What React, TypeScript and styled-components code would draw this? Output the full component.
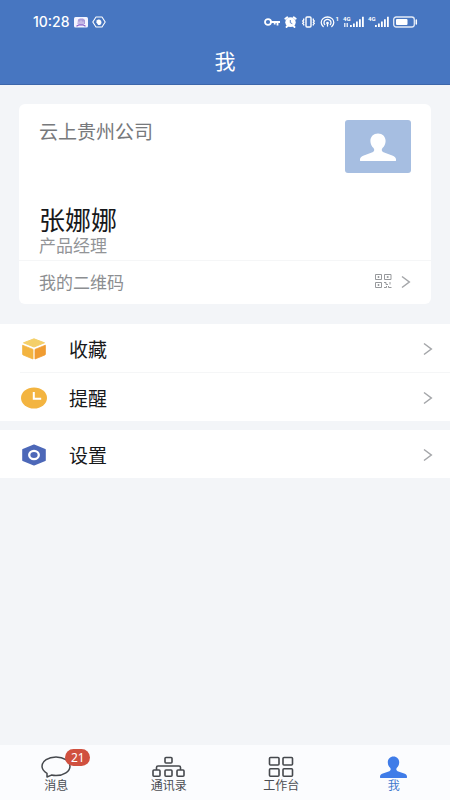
import React from "react";
import styled, { createGlobalStyle } from "styled-components";

const GlobalStyle = createGlobalStyle`
  *, *::before, *::after { box-sizing: border-box; }
  body {
    margin: 0;
    background: #f3f5f8;
    font-family: "Noto Sans CJK SC", sans-serif;
    color: #17181a;
  }
  h1, h2, p, ul { margin: 0; padding: 0; font-weight: 400; }
  ul { list-style: none; }
  svg { display: block; flex: none; }
  button { font: inherit; color: inherit; border: 0; background: none; padding: 0; cursor: pointer; }
`;

const Page = styled.div`
  min-height: 100vh;
  display: flex;
  flex-direction: column;
`;

const Header = styled.header`
  background: #4776c1;
  border-bottom: 1px solid #3c66aa;
  color: #fff;
`;

const StatusBar = styled.div`
  height: 42px;
  padding: 2px 32px 0 33px;
  display: flex;
  align-items: center;
  justify-content: space-between;
`;

const StatusGroup = styled.div`
  display: flex;
  align-items: center;
  gap: 4px;
`;

const Clock = styled.time`
  font: 500 14px/16px Inter, sans-serif;
`;

const SmallMark = styled.span`
  display: block;
  align-self: flex-start;
  font: 700 6px/6px Roboto, sans-serif;
`;

const HotspotGroup = styled.span`
  display: flex;
  gap: 1px;
`;

const SignalGroup = styled.span`
  display: grid;
  grid-template-columns: 7px 14px;
`;

const Title = styled.h1`
  height: 42px;
  font-size: 21px;
  line-height: 36px;
  text-align: center;
`;

const Main = styled.main`
  flex: 1;
`;

const Card = styled.section`
  margin: 19px 19px 20px;
  border-radius: 6px;
  background: #fff;
`;

const Profile = styled.div`
  height: 157px;
  padding: 16px 20px 5px;
  display: flex;
  justify-content: space-between;
  border-bottom: 1px solid #f5f6f7;
`;

const Identity = styled.div`
  display: flex;
  flex-direction: column;
`;

const Company = styled.p`
  font-size: 19px;
  line-height: 21px;
  color: #77797c;
`;

const Name = styled.h2`
  margin-top: auto;
  font-size: 26px;
  line-height: 32px;
`;

const Role = styled.p`
  font-size: 17px;
  line-height: 20px;
  color: #929497;
`;

const Avatar = styled.div`
  width: 66px;
  height: 53px;
  border-radius: 3px;
  background: #a6bee1;
  display: flex;
  align-items: center;
  justify-content: center;
`;

const QrRow = styled.button`
  width: 100%;
  height: 43px;
  padding: 0 20px 2px;
  display: flex;
  align-items: center;
  justify-content: space-between;
  font-size: 17px;
  line-height: 20px;
  color: #8c8e91;
`;

const QrEnd = styled.span`
  display: flex;
  align-items: center;
  gap: 9px;
`;

const Group = styled.ul`
  background: #fff;
  margin-bottom: 9px;
`;

const Item = styled.li`
  & + &::before {
    content: "";
    display: block;
    height: 1px;
    margin-left: 20px;
    background: #f5f6f7;
  }
`;

const ItemButton = styled.button`
  width: 100%;
  height: 48px;
  padding: 1px 17px 0 21px;
  display: flex;
  align-items: center;
  gap: 22px;
  font-size: 19px;
  line-height: 24px;
  text-align: left;
`;

const ItemLabel = styled.span`
  flex: 1;
`;

const TabBar = styled.nav`
  height: 55px;
  background: #fbfcfe;
  display: grid;
  grid-template-columns: repeat(4, 1fr);
`;

const Tab = styled.button<{ $active?: boolean }>`
  padding-bottom: 8px;
  display: flex;
  flex-direction: column;
  align-items: center;
  justify-content: flex-end;
  font-size: 12px;
  line-height: 14px;
  color: ${(p) => (p.$active ? "#3f78ce" : "#4a4d52")};
`;

const TabIcon = styled.span`
  position: relative;
  display: block;
`;

const Badge = styled.span`
  position: absolute;
  left: 24px;
  top: -7px;
  min-width: 25px;
  height: 17px;
  border-radius: 9px;
  background: #d0503f;
  color: #fff;
  font: 400 12px/17px "Noto Sans", sans-serif;
  text-align: center;
`;

const Chevron = () => (
  <svg width="10" height="14" viewBox="0 0 10 14" fill="none" stroke="#a4a6a9" strokeWidth="1.5" aria-hidden="true">
    <path d="M1 1.500 8.300 7 1 12.500" />
  </svg>
);

const Person = ({ width, height, color }: { width: number; height: number; color: string }) => (
  <svg width={width} height={height} viewBox="0 0 36 28" preserveAspectRatio="none" fill={color} aria-hidden="true">
    <path d="M18 .5c4.500 0 7.600 3.200 7.600 7.400 0 3-1.300 5.300-3.100 7.100-1.300 1.500-.8 3.500 1 4.300l8.700 3.100c2.500.9 3.800 2.200 3.800 4v1c0 .4-.3.600-.7.600H.7c-.4 0-.7-.2-.7-.6v-1c0-1.800 1.300-3.100 3.800-4l8.700-3.100c1.800-.8 2.300-2.800 1-4.300-1.800-1.800-3.100-4.100-3.100-7.100C10.400 3.700 13.500.5 18 .5Z" />
  </svg>
);

const QrIcon = () => (
  <svg width="17" height="15" viewBox="0 0 17 15" fill="none" stroke="#97999c" aria-hidden="true">
    <path d="M.5.5h6v5h-6zM9.500.5h6.500v5H9.500zM.5 8.500h6v5h-6z" />
    <path d="M2.500 3h2M3.500 2v2M11.700 3h2M12.700 2v2M2.500 11h2M3.500 10v2" />
    <path d="M9 8.500h2v2h2M15 8v2.500M9 13.500h2.500v-1.500M13.500 12v1.500H16.500" />
  </svg>
);

const BoxIcon = () => (
  <svg width="26" height="22" viewBox="0 0 26 22" aria-hidden="true">
    <path d="M13 .8 23.500 4.800 13 9 2.500 4.800Z" fill="#f4cf69" stroke="#f4cf69" strokeLinejoin="round" />
    <path d="M1.600 7.200 12 11.400v9.600L2.200 17c-.5-.2-.6-.4-.6-.9Z" fill="#f3b440" stroke="#f3b440" strokeWidth=".8" strokeLinejoin="round" />
    <path d="M24.400 7.200 14 11.400v9.600l9.800-4c.5-.2.600-.4.600-.9Z" fill="#f09c32" stroke="#f09c32" strokeWidth=".8" strokeLinejoin="round" />
  </svg>
);

const ClockIcon = () => (
  <svg width="26" height="22" viewBox="0 0 26 22" aria-hidden="true">
    <ellipse cx="13" cy="11" rx="13" ry="10.500" fill="#f3b440" />
    <path d="M12.800 5v6.700h7.400" fill="none" stroke="#fff" strokeWidth="2" />
  </svg>
);

const SettingsIcon = () => (
  <svg width="26" height="22" viewBox="0 0 26 22" aria-hidden="true">
    <path d="M13 1.200 24 5.800v10.400L13 20.800 2 16.200V5.800Z" fill="#4d68b8" stroke="#4d68b8" strokeWidth="1.600" strokeLinejoin="round" />
    <ellipse cx="13" cy="11" rx="4.800" ry="4.200" fill="none" stroke="#fff" strokeWidth="2.300" />
  </svg>
);

const MessageIcon = () => (
  <svg width="30" height="22" viewBox="0 0 30 22" fill="none" stroke="#45484d" strokeWidth="1.500" strokeLinejoin="round" aria-hidden="true">
    <path d="M15 1c7.700 0 14 4 14 9.300s-6.300 9.300-14 9.300c-1.600 0-3.200-.2-4.600-.5L6 21v-3.700C3 15.600 1 13.100 1 10.300 1 5 7.300 1 15 1Z" />
  </svg>
);

const ContactsIcon = () => (
  <svg width="33" height="22" viewBox="0 0 33 22" fill="none" stroke="#45484d" strokeWidth="1.600" strokeLinejoin="round" aria-hidden="true">
    <rect x="13" y="1.500" width="7" height="5.500" rx="1" />
    <path d="M4.500 14v-2.500c0-1 .4-1.500 1.500-1.500h21c1.100 0 1.500.5 1.500 1.500V14" />
    <rect x="1" y="14" width="7" height="6.200" rx="1" />
    <rect x="13" y="14" width="7" height="6.200" rx="1" />
    <rect x="25" y="14" width="7" height="6.200" rx="1" />
  </svg>
);

const GridIcon = () => (
  <svg width="26" height="22" viewBox="0 0 26 22" fill="none" stroke="#45484d" strokeWidth="1.600" aria-hidden="true">
    <rect x="1.500" y="1.500" width="9.500" height="7.500" rx="1" />
    <rect x="15" y="1.500" width="9.500" height="7.500" rx="1" />
    <rect x="1.500" y="12.700" width="9.500" height="7.500" rx="1" />
    <rect x="15" y="12.700" width="9.500" height="7.500" rx="1" />
  </svg>
);

const Signal = ({ arrows }: { arrows?: boolean }) => (
  <SignalGroup>
    <SmallMark>4G</SmallMark>
    <svg width="14" height="12" viewBox="0 0 14 12" fill="#fff" overflow="visible" aria-hidden="true">
      <path d="M0 9h1.800v2H0zM3 7.500h1.800V11H3zM6 5.500h1.800V11H6zM9 3.200h1.800V11H9zM12 .8h1.800V11H12z" />
      {arrows && <path d="M-6 7h1.500v4H-6zM-3.500 7H-2v4h-1.500z" opacity=".8" />}
    </svg>
  </SignalGroup>
);

const StatusIcons = () => (
  <StatusGroup>
    <svg width="16" height="10" viewBox="0 0 16 10" fill="none" stroke="#fff" strokeWidth="1.800" aria-hidden="true">
      <ellipse cx="4" cy="5" rx="3" ry="2.800" />
      <path d="M7 5h9M13.500 5v3.500M10.700 5v2.500" />
    </svg>
    <svg width="13" height="12" viewBox="0 0 13 12" aria-hidden="true">
      <ellipse cx="6.500" cy="6.200" rx="5.200" ry="4.900" fill="#fff" />
      <path d="M1.300 2.800 3.300 1.200M11.700 2.800 9.700 1.200M2.500 11l1.300-1.300M10.500 11l-1.300-1.300" stroke="#fff" strokeWidth="1.800" strokeLinecap="round" />
      <path d="M6.300 4v2.700l2 1" fill="none" stroke="#4776c1" strokeWidth=".9" />
    </svg>
    <svg width="15" height="12" viewBox="0 0 15 12" fill="none" stroke="#fff" aria-hidden="true">
      <rect x="5" y="1" width="5" height="10" rx="1" strokeWidth="1.400" />
      <path d="M2.700 2.500v1.500l-1 1 1 1.200-1 1.200 1 1v1.200M12.300 2.500v1.500l1 1-1 1.200 1 1.200-1 1v1.200" strokeWidth="1.300" />
    </svg>
    <HotspotGroup>
      <svg width="15" height="12" viewBox="0 0 15 12" fill="none" stroke="#fff" strokeWidth="1.300" strokeLinecap="round" aria-hidden="true">
        <path d="M3.200 10.500A6.300 5.500 0 1 1 11.800 10.500M4.700 8.500A3.500 3.100 0 1 1 10.300 8.500" />
        <circle cx="7.500" cy="7" r="1.300" fill="#fff" stroke="none" />
        <path d="M7.500 7v3" />
      </svg>
      <SmallMark>1</SmallMark>
    </HotspotGroup>
    <Signal arrows />
    <Signal />
    <svg width="25" height="12" viewBox="0 0 25 12" aria-hidden="true">
      <rect x=".7" y="1" width="20.600" height="10" rx="2.500" fill="none" stroke="#fff" strokeOpacity=".85" strokeWidth="1.300" />
      <rect x="3" y="3" width="11.500" height="6" rx="1" fill="#fff" />
      <path d="M23.300 4v4" stroke="#fff" strokeWidth="1.500" strokeLinecap="round" />
    </svg>
  </StatusGroup>
);

const AppBadges = () => (
  <>
    <svg width="14" height="11" viewBox="0 0 14 11" aria-hidden="true">
      <rect width="14" height="10.500" rx="1.500" fill="#f4f4ff" />
      <path d="M4 2.500 6 1.500h3L11 3v4H3.500Z" fill="#a99bd8" />
      <path d="M5 7V4.500M7 7V3.500M9 7V4.500" stroke="#ede6fa" strokeWidth=".8" />
      <path d="M2.500 9.200 5 7.800h4l2.500 1.400" fill="none" stroke="#8058c6" strokeWidth="1.300" />
    </svg>
    <svg width="14" height="12" viewBox="0 0 14 12" aria-hidden="true">
      <path d="M4 1h6l3.200 5L10 11H4L.8 6Z" fill="none" stroke="#fff" strokeWidth="1.100" strokeLinejoin="round" />
      <path d="M4.200 6.200 5 4.300l1-.8 1 .1 1 .2 1 .9.500 1.500-.5 2L7.700 9H6.200Z" fill="#fff" />
    </svg>
  </>
);

const Row = ({ icon, label }: { icon: React.ReactNode; label: string }) => (
  <Item>
    <ItemButton type="button">
      {icon}
      <ItemLabel>{label}</ItemLabel>
      <Chevron />
    </ItemButton>
  </Item>
);

export default function App() {
  return (
    <>
      <GlobalStyle />
      <Page>
        <Header>
          <StatusBar>
            <StatusGroup>
              <Clock>10:28</Clock>
              <AppBadges />
            </StatusGroup>
            <StatusIcons />
          </StatusBar>
          <Title>我</Title>
        </Header>
        <Main>
          <Card>
            <Profile>
              <Identity>
                <Company>云上贵州公司</Company>
                <Name>张娜娜</Name>
                <Role>产品经理</Role>
              </Identity>
              <Avatar>
                <Person width={36} height={28} color="#fff" />
              </Avatar>
            </Profile>
            <QrRow type="button">
              我的二维码
              <QrEnd>
                <QrIcon />
                <Chevron />
              </QrEnd>
            </QrRow>
          </Card>
          <Group>
            <Row icon={<BoxIcon />} label="收藏" />
            <Row icon={<ClockIcon />} label="提醒" />
          </Group>
          <Group>
            <Row icon={<SettingsIcon />} label="设置" />
          </Group>
        </Main>
        <TabBar>
          <Tab type="button">
            <TabIcon>
              <MessageIcon />
              <Badge>21</Badge>
            </TabIcon>
            消息
          </Tab>
          <Tab type="button">
            <TabIcon>
              <ContactsIcon />
            </TabIcon>
            通讯录
          </Tab>
          <Tab type="button">
            <TabIcon>
              <GridIcon />
            </TabIcon>
            工作台
          </Tab>
          <Tab type="button" $active aria-current="page">
            <TabIcon>
              <Person width={27} height={22} color="#3f7ce8" />
            </TabIcon>
            我
          </Tab>
        </TabBar>
      </Page>
    </>
  );
}
